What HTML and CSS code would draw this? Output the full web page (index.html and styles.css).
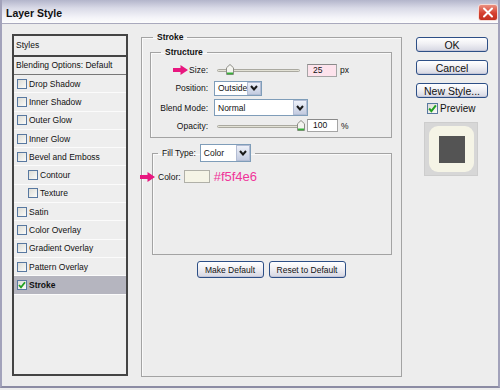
FILE: index.html
```html
<!DOCTYPE html>
<html>
<head>
<meta charset="utf-8">
<link rel="stylesheet" href="styles.css">
</head>
<body>
<div class="window">
  <div class="titlebar">
    <span class="title">Layer Style</span>
    <span class="close"><svg width="12" height="11" viewBox="0 0 12 11"><path d="M2 1.5 L10 9.5 M10 1.5 L2 9.5" stroke="#fff" stroke-width="2" stroke-linecap="round"/></svg></span>
  </div>
  <div class="main">
    <div class="list">
      <div class="list-head">Styles</div>
      <div class="list-blend">Blending Options: Default</div>
      <div class="item"><span class="cb"></span>Drop Shadow</div>
      <div class="item"><span class="cb"></span>Inner Shadow</div>
      <div class="item"><span class="cb"></span>Outer Glow</div>
      <div class="item"><span class="cb"></span>Inner Glow</div>
      <div class="item"><span class="cb"></span>Bevel and Emboss</div>
      <div class="item sub"><span class="cb"></span>Contour</div>
      <div class="item sub"><span class="cb"></span>Texture</div>
      <div class="item"><span class="cb"></span>Satin</div>
      <div class="item"><span class="cb"></span>Color Overlay</div>
      <div class="item"><span class="cb"></span>Gradient Overlay</div>
      <div class="item"><span class="cb"></span>Pattern Overlay</div>
      <div class="item active"><span class="cb"><svg width="8" height="8" viewBox="0 0 8 8"><path d="M1 4 L3 6.3 L7 1.3" stroke="#21a121" stroke-width="1.8" fill="none"/></svg></span>Stroke</div>
    </div>

    <div class="middle">
      <fieldset class="group outer">
        <legend class="legend-bold">Stroke</legend>
        <fieldset class="group structure">
          <legend class="legend-bold">Structure</legend>
          <div class="form">
            <div class="lbl">
              <svg class="pink-arrow size-arrow" width="15" height="10" viewBox="0 0 15 10"><path d="M0 3 H7.5 V0 L15 5 L7.5 10 V7 H0 Z" fill="#e8177f"/></svg>
              Size:
            </div>
            <div class="ctrl">
              <div class="slider">
                <div class="track"></div>
                <svg class="thumb thumb-size" width="8" height="11" viewBox="0 0 8 11"><path d="M0.5 3.8 L4 0.5 L7.5 3.8 V10.5 H0.5 Z" fill="#f4f4f0" stroke="#8d8d86"/><rect x="1" y="8.5" width="6" height="1.8" fill="#38b03a"/></svg>
              </div>
              <div class="field pink">25</div>
              <span class="unit">px</span>
            </div>

            <div class="lbl">Position:</div>
            <div class="ctrl">
              <div class="select sel-pos">
                <span class="select-text">Outside</span>
                <span class="select-btn"><svg width="8" height="6" viewBox="0 0 8 6"><path d="M1 1 L4 4.5 L7 1" stroke="#1a1a1a" stroke-width="2" fill="none"/></svg></span>
              </div>
            </div>

            <div class="lbl">Blend Mode:</div>
            <div class="ctrl">
              <div class="select sel-blend">
                <span class="select-text">Normal</span>
                <span class="select-btn"><svg width="8" height="6" viewBox="0 0 8 6"><path d="M1 1 L4 4.5 L7 1" stroke="#1a1a1a" stroke-width="2" fill="none"/></svg></span>
              </div>
            </div>

            <div class="lbl">Opacity:</div>
            <div class="ctrl">
              <div class="slider">
                <div class="track"></div>
                <svg class="thumb thumb-opacity" width="8" height="11" viewBox="0 0 8 11"><path d="M0.5 3.8 L4 0.5 L7.5 3.8 V10.5 H0.5 Z" fill="#f4f4f0" stroke="#8d8d86"/><rect x="1" y="8.5" width="6" height="1.8" fill="#38b03a"/></svg>
              </div>
              <div class="field wide">100</div>
              <span class="unit">%</span>
            </div>
          </div>
        </fieldset>

        <fieldset class="group fill">
          <legend class="fill-legend">
            <span>Fill Type:</span>
            <span class="select sel-fill">
              <span class="select-text">Color</span>
              <span class="select-btn"><svg width="8" height="6" viewBox="0 0 8 6"><path d="M1 1 L4 4.5 L7 1" stroke="#1a1a1a" stroke-width="2" fill="none"/></svg></span>
            </span>
          </legend>
          <div class="color-row">
            <svg class="pink-arrow color-arrow" width="15" height="10" viewBox="0 0 15 10"><path d="M0 3 H7.5 V0 L15 5 L7.5 10 V7 H0 Z" fill="#e8177f"/></svg>
            <span>Color:</span>
            <span class="swatch"></span>
            <span class="hex">#f5f4e6</span>
          </div>
        </fieldset>

        <div class="btn-row">
          <div class="btn small w-make">Make Default</div>
          <div class="btn small w-reset">Reset to Default</div>
        </div>
      </fieldset>
    </div>

    <div class="side">
      <div class="btn big">OK</div>
      <div class="btn big">Cancel</div>
      <div class="btn big">New Style...</div>
      <div class="preview-row">
        <span class="cb cb-preview"><svg width="9" height="9" viewBox="0 0 8 8"><path d="M1 4 L3 6.3 L7 1.3" stroke="#21a121" stroke-width="1.8" fill="none"/></svg></span>
        <span>Preview</span>
      </div>
      <div class="preview">
        <div class="preview-shape"><div class="preview-core"></div></div>
      </div>
    </div>
  </div>
</div>
</body>
</html>
```

FILE: styles.css
```css
html, body {
  margin: 0;
  padding: 0;
  background: #ececec;
}
body {
  font-family: "Liberation Sans", Arial, sans-serif;
  font-size: 8.5px;
  color: #111;
}
.window {
  width: 500px;
  height: 388px;
  box-sizing: border-box;
  border-left: 2px solid #a2a2ba;
  border-right: 2px solid #a2a2ba;
  border-bottom: 2px solid #8c8ca4;
  background: #ededed;
  display: flex;
  flex-direction: column;
  overflow: hidden;
}
.titlebar {
  flex: none;
  height: 23px;
  border-bottom: 1px solid #a9a9bd;
  display: flex;
  align-items: center;
  justify-content: space-between;
  padding: 0 0 0 4px;
  background: linear-gradient(#b3b5cb, #d9dae7 35%, #f3f3f8 75%, #fdfdfd);
}
.title {
  font-size: 10.5px;
  font-weight: bold;
  color: #111;
  margin-top: 2px;
}
.close {
  width: 20px;
  height: 17px;
  box-sizing: border-box;
  border: 1px solid #f4dcd8;
  border-radius: 3px;
  background: linear-gradient(#ea8f80, #d5402f 55%, #c2301f);
  display: flex;
  align-items: center;
  justify-content: center;
  margin-top: 1px;
}
.main {
  flex: 1;
  display: flex;
  align-items: flex-start;
  padding: 7px 0 0 10px;
}

/* left list */
.list {
  width: 116px;
  height: 342px;
  margin-top: 3px;
  box-sizing: border-box;
  border: 2px solid #444;
  background: #eeeeee;
}
.list-head {
  height: 19px;
  line-height: 19px;
  padding-left: 2px;
  border-bottom: 2px solid #444;
}
.list-blend {
  height: 17px;
  line-height: 17px;
  padding-left: 2px;
  border-bottom: 1px solid #777;
}
.item {
  height: 17.3px;
  border-bottom: 1px solid #fbfbfb;
  display: flex;
  align-items: center;
  padding-left: 3px;
}
.item.sub {
  padding-left: 14px;
}
.item.active {
  background: #b5b5bf;
  font-weight: bold;
}
.cb {
  width: 10px;
  height: 10px;
  box-sizing: border-box;
  border: 1px solid #5878a0;
  background: linear-gradient(135deg, #dcdcd6, #fbfbf9);
  margin-right: 2px;
  display: inline-flex;
  align-items: center;
  justify-content: center;
  flex: none;
}

/* middle */
.middle {
  margin-left: 13px;
  width: 261px;
}
.group {
  margin: 0;
  min-width: 0;
  border: 1px solid #a3a3a3;
  box-shadow: inset 1px 1px 0 #fafafa;
}
.outer {
  box-sizing: border-box;
  height: 346px;
  padding: 3px 9px 0 8px;
}
.legend-bold {
  font-weight: bold;
  line-height: 12px;
}
.outer > legend {
  margin-left: 3px;
  padding: 0 4px;
}
.structure {
  padding: 0;
}
.structure > legend {
  margin-left: 10px;
  padding: 0 4px;
}
.form {
  display: grid;
  grid-template-columns: 57px 1fr;
  grid-template-rows: 16px 18px 19px 15px;
  row-gap: 1px;
  column-gap: 6px;
  padding: 4px 0 4px 0;
}
.lbl {
  position: relative;
  display: flex;
  align-items: center;
  justify-content: flex-end;
}
.ctrl {
  display: flex;
  align-items: center;
}
.pink-arrow {
  position: absolute;
}
.size-arrow {
  left: 22px;
  top: 3px;
}
.slider {
  position: relative;
  width: 88px;
  height: 14px;
  margin-left: 3px;
}
.track {
  position: absolute;
  left: 0;
  top: 6px;
  width: 83px;
  height: 3px;
  box-sizing: border-box;
  border: 1px solid #aaa9a0;
  border-radius: 2px;
  background: #e3e2d6;
}
.thumb {
  position: absolute;
  top: 1px;
}
.thumb-size {
  left: 9px;
}
.thumb-opacity {
  left: 80px;
}
.field {
  margin-left: 2px;
  width: 30px;
  height: 13px;
  box-sizing: border-box;
  border: 1px solid #a5a5a5;
  border-top-color: #8a8a8a;
  background: #fff;
  padding-left: 5px;
  line-height: 11px;
}
.field.pink {
  background: #fde3ec;
}
.field.wide {
  width: 31px;
}
.unit {
  margin-left: 3px;
}
.select {
  display: flex;
  box-sizing: border-box;
  border: 1px solid #7f9db9;
  background: #fff;
  height: 15px;
}
.select-text {
  flex: 1;
  padding-left: 3px;
  display: flex;
  align-items: center;
}
.select-btn {
  width: 14px;
  flex: none;
  box-sizing: border-box;
  border: 1px solid #b3bdd4;
  background: linear-gradient(#eef1f9, #c3cbe0);
  display: flex;
  align-items: center;
  justify-content: center;
}
.sel-pos {
  width: 48px;
}
.sel-blend {
  width: 94px;
  height: 17px;
}
.sel-fill {
  width: 51px;
  height: 18px;
  margin-left: 4px;
}

/* fill */
.fill {
  margin: 6px 0 0 2px;
  padding: 0;
  box-sizing: border-box;
  height: 111px;
}
.fill-legend {
  margin-left: 5px;
  padding: 0 4px;
  display: flex;
  align-items: center;
}
.color-row {
  position: relative;
  display: flex;
  align-items: center;
  height: 13px;
  margin-top: 8px;
  padding-left: 5px;
}
.color-arrow {
  left: -13px;
  top: 2px;
}
.swatch {
  width: 26px;
  height: 13px;
  box-sizing: border-box;
  border: 1px solid #b0b0a8;
  background: #f5f4e6;
  margin-left: 3px;
}
.hex {
  margin-left: 4px;
  font-size: 13px;
  color: #f0359a;
}
.btn-row {
  display: flex;
  justify-content: center;
  gap: 5px;
  margin-top: 6px;
}

/* buttons */
.btn {
  box-sizing: border-box;
  border: 1px solid #2d4f86;
  border-radius: 3px;
  background: linear-gradient(#ffffff, #f0f0f4 45%, #d5d6e2);
  box-shadow: inset 0 -1px 0 #c4c6d8;
  display: flex;
  align-items: center;
  justify-content: center;
  color: #111;
}
.btn.small {
  height: 17px;
}
.w-make {
  width: 67px;
}
.w-reset {
  width: 77px;
}
.side {
  margin-left: 14px;
  margin-top: 6px;
  width: 72px;
  display: flex;
  flex-direction: column;
}
.btn.big {
  height: 15px;
  font-size: 10.5px;
  margin-bottom: 8px;
}
.btn.big:nth-child(3) {
  margin-bottom: 0;
}
.preview-row {
  display: flex;
  align-items: center;
  height: 11px;
  margin-top: 5px;
  padding-left: 11px;
  font-size: 10px;
}
.cb-preview {
  width: 11px;
  height: 11px;
  margin-right: 2px;
}
.preview {
  margin: 8px 0 0 8px;
  width: 54px;
  height: 54px;
  box-sizing: border-box;
  background: #d7d7d7;
  border: 1px solid #cdcdcd;
  padding: 3px 0 0 4px;
}
.preview-shape {
  width: 45px;
  height: 46px;
  border-radius: 9px;
  background: #f5f4e6;
  display: flex;
  align-items: center;
  justify-content: center;
}
.preview-core {
  width: 26px;
  height: 27px;
  background: #545454;
}
```
